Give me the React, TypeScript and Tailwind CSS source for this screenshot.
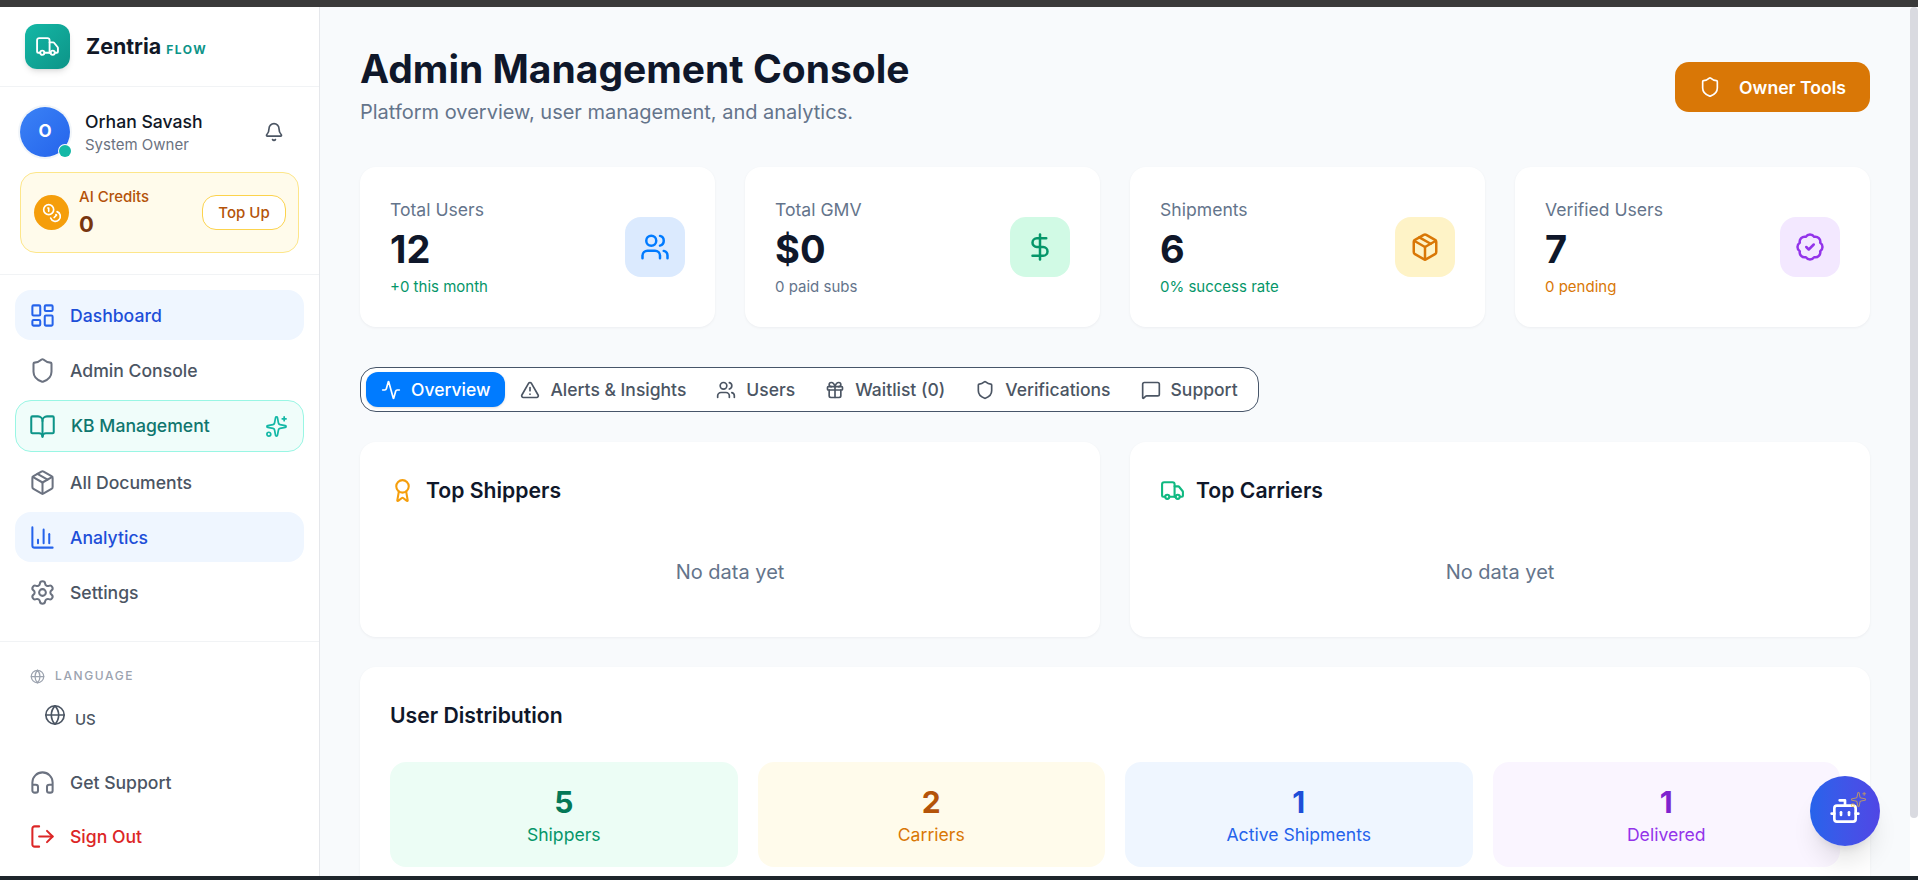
import { Truck, Bell, Coins, LayoutDashboard, Shield, BookOpen, Sparkles, Package, ChartColumn, Settings, Globe, Headphones, LogOut, Users, DollarSign, BadgeCheck, Activity, TriangleAlert, Gift, MessageSquare, Award, Bot } from "lucide-react";

const font = "font-['Inter','Liberation_Sans',sans-serif]";

function NavItem({ icon: Icon, label, active }: { icon: any; label: string; active?: boolean }) {
  return (
    <div className={`flex h-[50px] items-center gap-[14px] rounded-2xl px-[14px] text-[17.6px] font-medium ${active ? "bg-[#eff6ff] text-[#1d4ed8]" : "text-[#4b5563]"}`}>
      <Icon size={27} strokeWidth={1.8} className={active ? "text-[#2563eb]" : "text-[#6b7280]"} />
      <span className="pt-[2px]">{label}</span>
    </div>
  );
}

function Stat({ title, value, sub, subCls, iconBg, icon: Icon, iconCls }: any) {
  return (
    <div className="flex h-[160px] items-center justify-between rounded-2xl bg-white px-[30px] shadow-[0_1px_3px_rgba(15,23,42,0.05)]">
      <div>
        <div className="pt-[1px] text-[17.6px] leading-[26px] text-[#64748b]">{title}</div>
        <div className="mt-[3px] text-[38px] font-bold leading-[46px] text-[#0f172a]">{value}</div>
        <div className={`mt-[5px] pb-[1px] text-[15px] leading-[20px] ${subCls}`}>{sub}</div>
      </div>
      <div className={`flex h-[60px] w-[60px] items-center justify-center rounded-2xl ${iconBg}`}>
        <Icon size={30} strokeWidth={2} className={iconCls} />
      </div>
    </div>
  );
}

function Tab({ icon: Icon, label, active }: { icon: any; label: string; active?: boolean }) {
  return (
    <div className={`flex h-[35px] items-center gap-[10px] rounded-xl px-[15px] text-[17.5px] font-medium ${active ? "bg-[#007bff] text-white shadow-sm" : "text-[#4b5563]"}`}>
      <Icon size={20} strokeWidth={2} className={active ? "text-white" : "text-[#4b5563]"} />
      <span className="pt-[1px]">{label}</span>
    </div>
  );
}

function TopCard({ icon: Icon, iconCls, title }: any) {
  return (
    <div className="h-[195px] rounded-2xl bg-white p-[30px] shadow-[0_1px_3px_rgba(15,23,42,0.05)]">
      <div className="flex items-center gap-[11px]">
        <Icon size={25} strokeWidth={2} className={iconCls} />
        <h3 className="text-[21.2px] font-semibold leading-[36px] text-[#0f172a]">{title}</h3>
      </div>
      <div className="mt-[50px] text-center text-[20px] leading-[28px] text-[#64748b]">No data yet</div>
    </div>
  );
}

function Dist({ value, label, bg, vc, lc }: any) {
  return (
    <div className={`flex h-[105px] flex-col items-center justify-center rounded-2xl ${bg}`}>
      <div className={`pt-[2px] text-[30px] font-bold leading-[38px] ${vc}`}>{value}</div>
      <div className={`pt-[1px] text-[17.6px] leading-[26px] ${lc}`}>{label}</div>
    </div>
  );
}

export default function App() {
  return (
    <div className={`flex h-[880px] w-[1918px] flex-col overflow-hidden bg-[#f8fafc] ${font}`}>
      <div className="h-[7px] shrink-0 bg-[#3a3a3a]" />
      <div className="relative flex min-h-0 flex-1">
        <aside className="flex w-[320px] shrink-0 flex-col border-r border-[#e5e7eb] bg-white">
          <div className="flex h-[80px] shrink-0 items-center gap-[16px] border-b border-[#f1f3f5] pl-[25px]">
            <div className="flex h-[45px] w-[45px] items-center justify-center rounded-[12px] bg-gradient-to-br from-[#14b8a6] to-[#0d9488] shadow-md">
              <Truck size={25} strokeWidth={1.8} className="text-white" />
            </div>
            <div className="flex items-baseline gap-[5px] pt-[2px]">
              <span className="text-[21.4px] font-bold leading-none text-[#111827]">Zentria</span>
              <span className="text-[12px] font-bold tracking-[1.5px] text-[#0d9488]">FLOW</span>
            </div>
          </div>
          <div className="h-[188px] shrink-0 border-b border-[#f1f3f5] px-[20px] pt-[20px]">
            <div className="flex items-center">
              <div className="relative flex h-[50px] w-[50px] items-center justify-center rounded-full bg-gradient-to-br from-[#3b82f6] to-[#2563eb] text-[17px] font-bold text-white ring-2 ring-[#f1f5f9]">
                O
                <span className="absolute bottom-0 right-[-1px] h-[12px] w-[12px] rounded-full bg-[#14b8a6] ring-1 ring-white" />
              </div>
              <div className="ml-[15px] flex-1">
                <div className="text-[17.6px] font-medium leading-[24px] text-[#111827]">Orhan Savash</div>
                <div className="pt-[1px] text-[15px] leading-[20px] text-[#6b7280]">System Owner</div>
              </div>
              <Bell size={20} strokeWidth={2} className="mr-[15px] text-[#4b5563]" />
            </div>
            <div className="mt-[15px] flex h-[81px] w-[279px] items-center rounded-2xl border border-[#fde68a] bg-[#fffbeb] pl-[13px] pr-[12px]">
              <div className="flex h-[35px] w-[35px] items-center justify-center rounded-full bg-[#f59e0b]">
                <Coins size={20} strokeWidth={2} className="text-white" />
              </div>
              <div className="ml-[10px] flex-1">
                <div className="text-[15px] font-medium leading-[20px] text-[#b45309]">AI Credits</div>
                <div className="mt-[3px] text-[22px] font-bold leading-[28px] text-[#78350f]">0</div>
              </div>
              <div className="flex h-[35px] w-[84px] items-center justify-center rounded-[14px] border border-[#fcd34d] bg-white pt-[1px] text-[15px] font-medium text-[#b45309]">Top Up</div>
            </div>
          </div>
          <nav className="flex h-[367px] shrink-0 flex-col gap-[5px] border-b border-[#f1f3f5] px-[15px] pt-[15px]">
            <NavItem icon={LayoutDashboard} label="Dashboard" active />
            <NavItem icon={Shield} label="Admin Console" />
            <div className="flex h-[52px] items-center rounded-2xl border border-[#99f6e4] bg-[#f0fdfa] pl-[13px] pr-[15px] text-[17.6px] font-medium text-[#0f766e]">
              <BookOpen size={27} strokeWidth={1.8} className="text-[#0d9488]" />
              <span className="ml-[15px] flex-1 pt-[1px]">KB Management</span>
              <Sparkles size={23} strokeWidth={1.8} className="text-[#14b8a6]" />
            </div>
            <NavItem icon={Package} label="All Documents" />
            <NavItem icon={ChartColumn} label="Analytics" active />
            <NavItem icon={Settings} label="Settings" />
          </nav>
          <div className="flex-1 px-[15px] pt-[26px]">
            <div className="flex items-center gap-[10px] pl-[15px] text-[12px] font-medium leading-[16px] tracking-[1.6px] text-[#9ca3af]">
              <Globe size={15} strokeWidth={2} />
              <span>LANGUAGE</span>
            </div>
            <div className="mt-[23px] flex items-start gap-[9px] pl-[29px] text-[15px] font-medium text-[#4b5563]">
              <Globe size={22} strokeWidth={1.8} className="mt-[-3px]" />
              <span className="pt-[1px] leading-[24px]">US</span>
            </div>
            <div className="mt-[25px] flex flex-col gap-[4px]">
              <NavItem icon={Headphones} label="Get Support" />
              <div className="flex h-[50px] items-center gap-[14px] rounded-2xl px-[14px] text-[17.6px] font-medium text-[#dc2626]">
                <LogOut size={27} strokeWidth={1.8} />
                <span className="pt-[2px]">Sign Out</span>
              </div>
            </div>
          </div>
        </aside>
        <main className="min-w-0 flex-1 overflow-hidden pl-[40px] pr-[40px] pt-[33px]">
          <div className="flex items-start justify-between">
            <div>
              <h1 className="pt-[3px] text-[39px] font-bold leading-[52px] text-[#0f172a]">Admin Management Console</h1>
              <p className="mt-[2px] text-[20px] leading-[30px] text-[#64748b]">Platform overview, user management, and analytics.</p>
            </div>
            <div className="mt-[22px] flex h-[50px] w-[195px] items-center justify-center gap-[18px] rounded-[14px] bg-[#d97706] text-[17.6px] font-semibold text-white">
              <Shield size={22} strokeWidth={1.8} />
              <span className="pt-[2px]">Owner Tools</span>
            </div>
          </div>
          <div className="mt-[40px] grid grid-cols-4 gap-[30px]">
            <Stat title="Total Users" value="12" sub="+0 this month" subCls="text-[#059669]" iconBg="bg-[#dbeafe]" icon={Users} iconCls="text-[#007bff]" />
            <Stat title="Total GMV" value="$0" sub="0 paid subs" subCls="text-[#64748b]" iconBg="bg-[#d1fae5]" icon={DollarSign} iconCls="text-[#059669]" />
            <Stat title="Shipments" value="6" sub="0% success rate" subCls="text-[#059669]" iconBg="bg-[#fef3c7]" icon={Package} iconCls="text-[#d97706]" />
            <Stat title="Verified Users" value="7" sub="0 pending" subCls="text-[#d97706]" iconBg="bg-[#f3e8ff]" icon={BadgeCheck} iconCls="text-[#9333ea]" />
          </div>
          <div className="mt-[40px] flex h-[45px] w-fit items-center rounded-2xl border border-[#475569] bg-white px-[5px]">
            <Tab icon={Activity} label="Overview" active />
            <Tab icon={TriangleAlert} label="Alerts & Insights" />
            <Tab icon={Users} label="Users" />
            <Tab icon={Gift} label="Waitlist (0)" />
            <Tab icon={Shield} label="Verifications" />
            <Tab icon={MessageSquare} label="Support" />
          </div>
          <div className="mt-[30px] grid grid-cols-2 gap-[30px]">
            <TopCard icon={Award} iconCls="text-[#f59e0b]" title="Top Shippers" />
            <TopCard icon={Truck} iconCls="text-[#10b981]" title="Top Carriers" />
          </div>
          <div className="mt-[30px] rounded-2xl bg-white p-[30px] shadow-[0_1px_3px_rgba(15,23,42,0.05)]">
            <h3 className="text-[21.2px] font-semibold leading-[36px] text-[#0f172a]">User Distribution</h3>
            <div className="mt-[29px] grid grid-cols-4 gap-[20px]">
              <Dist value="5" label="Shippers" bg="bg-[#ecfdf5]" vc="text-[#047857]" lc="text-[#059669]" />
              <Dist value="2" label="Carriers" bg="bg-[#fffbeb]" vc="text-[#b45309]" lc="text-[#d97706]" />
              <Dist value="1" label="Active Shipments" bg="bg-[#eff6ff]" vc="text-[#1d4ed8]" lc="text-[#2563eb]" />
              <Dist value="1" label="Delivered" bg="bg-[#faf5ff]" vc="text-[#7e22ce]" lc="text-[#9333ea]" />
            </div>
          </div>
        </main>
        <div className="w-[8px] shrink-0 bg-white">
          <div className="h-[811px] rounded-[4px] bg-[#d9dae0]" />
        </div>
        <div className="absolute bottom-[30px] right-[38px] flex h-[70px] w-[70px] items-center justify-center rounded-full bg-gradient-to-r from-[#2563eb] to-[#4f46e5] shadow-xl">
          <Bot size={32} strokeWidth={2} className="text-white" />
          <Sparkles size={17} strokeWidth={1.5} className="absolute right-[13px] top-[15px] text-[#fbbf24] opacity-60" />
        </div>
      </div>
      <div className="h-[4px] shrink-0 bg-[#1e252b]" />
    </div>
  );
}
